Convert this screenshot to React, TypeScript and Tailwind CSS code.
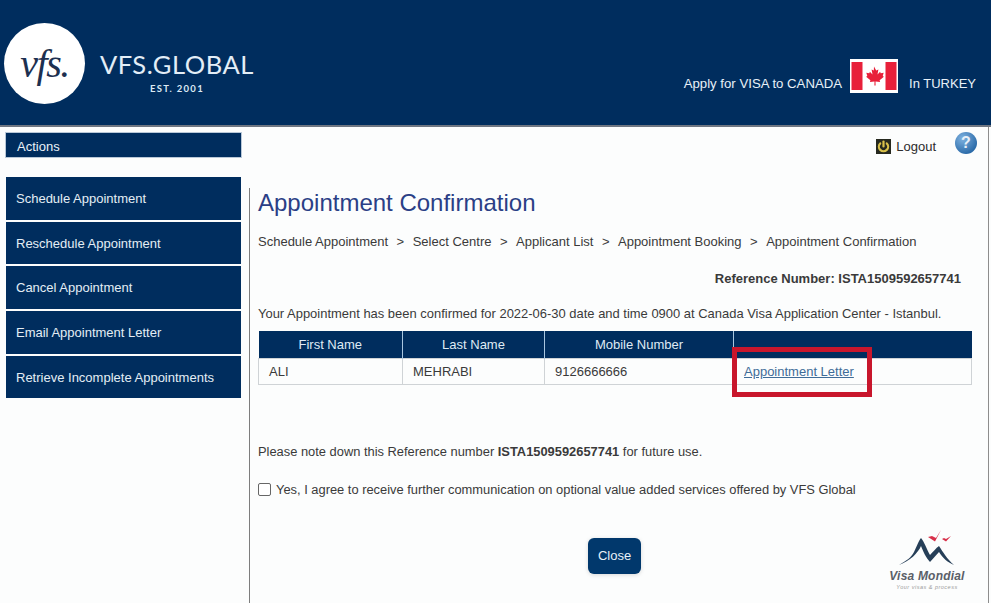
import React from 'react';

const menuItems = [
  { label: 'Schedule Appointment', height: 'h-[43px]' },
  { label: 'Reschedule Appointment', height: 'h-[42px] pt-[1px]' },
  { label: 'Cancel Appointment', height: 'h-[43px]' },
  { label: 'Email Appointment Letter', height: 'h-[43px]' },
  { label: 'Retrieve Incomplete Appointments', height: 'h-[42px] pt-[1px]' },
];

const crumbs = ['Schedule Appointment', 'Select Centre', 'Applicant List', 'Appointment Booking', 'Appointment Confirmation'];

function MapleFlag() {
  return (
    <svg viewBox="0 0 48 32" className="h-[34px] w-[48px]">
      <rect width="48" height="32" fill="#ffffff" />
      <rect x="1.5" y="2" width="11" height="28" fill="#e8203a" />
      <rect x="35.5" y="2" width="11" height="28" fill="#e8203a" />
      <path
        d="M24 6.5l2.2 4 2.2-1.1-.9 5 2.6-2.6.6 1.5 3-.5-1 3.2 1.2.7-4.3 3.6.5 1.7-4.6-.6.1 4.1h-1.2l.1-4.1-4.6.6.5-1.7-4.3-3.6 1.2-.7-1-3.2 3 .5.6-1.5 2.6 2.6-.9-5 2.2 1.1z"
        fill="#e8203a"
      />
    </svg>
  );
}

function PowerIcon() {
  return (
    <svg viewBox="0 0 15 15" className="h-[15px] w-[15px]">
      <rect width="15" height="15" fill="#26291f" />
      <path d="M4.2 4.4a4.6 4.6 0 1 0 6.6 0" fill="none" stroke="#d8c04a" strokeWidth="2.2" strokeLinecap="round" />
      <path d="M7.5 2.5v5" stroke="#d8c04a" strokeWidth="2.2" strokeLinecap="round" />
    </svg>
  );
}

function HelpIcon() {
  return (
    <div className="flex h-[22px] w-[22px] items-center justify-center rounded-full bg-[radial-gradient(circle_at_35%_30%,#7fb2e0,#2a6aa8_75%)] text-[16px] font-bold text-[#e8f0f8]">
      ?
    </div>
  );
}

function VisaMondialLogo() {
  return (
    <div className="flex w-[80px] flex-col items-center whitespace-nowrap">
      <svg viewBox="0 0 60 40" className="h-[40px] w-[60px]">
        <path d="M2 37C10 32 14 30 17 24C20 18 22 12 24 10C27 13 30 22 33 27C36 24 39 20 42 18C46 24 50 31 57 37C50 34 46 30 42 24C39 27 36 31 33 34C29 30 26 23 24 18C21 25 13 33 2 37Z" fill="#263f58" />
        <path d="M31 9L38 13.5L44 2L39 10L35 8Z" fill="#d8304a" />
        <path d="M45 11L49 13.5L54 8L49 11L47 10Z" fill="#d8304a" />
      </svg>
      <span className="mt-[1px] text-[12px] leading-[14px] font-bold tracking-[0.2px] text-[#5a6068] italic">Visa Mondial</span>
      <span className="mt-[1px] text-[5.5px] leading-[7px] tracking-[0.5px] text-[#9a9a9a] italic">Your visas & process</span>
    </div>
  );
}

export default function App() {
  return (
    <div className="flex h-[603px] w-[991px] flex-col overflow-hidden bg-[#fcfdfd] font-['Liberation_Sans',Arial,sans-serif] text-[13px] text-[#3a3a3a]">
      {/* Header */}
      <header className="flex h-[127px] shrink-0 items-start justify-between border-b-2 border-[#6f7682] bg-[#002d5e]">
        <div className="mt-[23px] ml-[4px] flex items-center">
          <div className="flex h-[81px] w-[81px] items-center justify-center rounded-full bg-white font-['Liberation_Serif',serif] text-[40px] leading-none tracking-[-1.5px] text-[#1d3050] italic">
            vfs.
          </div>
          <div className="mt-[18px] ml-[15px] flex flex-col items-center">
            <span className="font-['Lato',sans-serif] text-[25.5px] leading-[28px] font-normal tracking-[0.55px] text-[#e3eef7]">VFS.GLOBAL</span>
            <span className="mt-[5px] font-['Lato',sans-serif] text-[9.5px] leading-[12px] font-bold tracking-[1.3px] text-[#dce9f4]">EST. 2001</span>
          </div>
        </div>
        <div className="mt-[59px] mr-[15px] flex items-start text-[#e8f1f8]">
          <span className="mt-[15px] text-[13.2px]">Apply for VISA to CANADA</span>
          <span className="mx-[8px] block h-[34px] w-[48px] bg-white">
            <MapleFlag />
          </span>
          <span className="mt-[15px] ml-[3px]">In TURKEY</span>
        </div>
      </header>

      <div className="mr-[2px] flex min-h-0 flex-1 border-r border-r-[#8d8d8d]">
        {/* Sidebar */}
        <aside className="w-[249px] shrink-0 pt-[5px] pl-[5px]">
          <div className="flex h-[26px] w-[237px] items-center border border-[#b9c8d8] bg-[#002d5e] pt-[3px] pl-[11px] text-[#eaf2f8]">Actions</div>
          <nav className="mt-[19px] ml-[1px] flex w-[235px] flex-col gap-[2px]">
            {menuItems.map(item => (
              <div key={item.label} className={`flex ${item.height} items-center bg-[#002d5e] pl-[10px] text-[#e4edf5]`}>
                {item.label}
              </div>
            ))}
          </nav>
        </aside>

        {/* Content */}
        <main className="relative min-w-0 flex-1">
          <div className="flex h-[45px] items-start justify-end pr-[11px]">
            <div className="mt-[10px] flex items-center">
              <PowerIcon />
              <span className="mr-[19px] ml-[5px] text-[#2c2c2c]">Logout</span>
            </div>
            <div className="mt-[5px]">
              <HelpIcon />
            </div>
          </div>
          <div className="h-[431px] border-l border-[#7d7d7d] pl-[8px]">
            <h1 className="mt-[16px] text-[24px] leading-[30px] text-[#2b3f86]">Appointment Confirmation</h1>
            <div className="mt-[14px] flex items-center gap-[8.5px] leading-[20px]">
              {crumbs.map((crumb, i) => (
                <React.Fragment key={crumb}>
                  {i > 0 && <span>&gt;</span>}
                  <span>{crumb}</span>
                </React.Fragment>
              ))}
            </div>
            <div className="mt-[17px] pr-[27px] text-right leading-[20px] font-bold">Reference Number: ISTA1509592657741</div>
            <p className="mt-[15px] text-[12.96px] leading-[20px] whitespace-nowrap">Your Appointment has been confirmed for 2022-06-30 date and time 0900 at Canada Visa Application Center - Istanbul.</p>

            <table className="relative mt-[7px] w-[714px] table-fixed border-collapse">
              <thead>
                <tr className="h-[27px] bg-[#002d5e] font-normal text-[#dfeaf4]">
                  <th className="w-[144px] border-r border-[#a9c6e0] font-normal">First Name</th>
                  <th className="w-[142px] border-r border-[#a9c6e0] font-normal">Last Name</th>
                  <th className="w-[189px] border-r border-[#a9c6e0] font-normal">Mobile Number</th>
                  <th />
                </tr>
              </thead>
              <tbody>
                <tr className="h-[26px]">
                  <td className="border border-[#cfd3d6] pt-[1px] pl-[10px]">ALI</td>
                  <td className="border border-[#cfd3d6] pt-[1px] pl-[10px]">MEHRABI</td>
                  <td className="border border-[#cfd3d6] pt-[1px] pl-[10px]">9126666666</td>
                  <td className="border border-[#cfd3d6] pt-[1px] pl-[10px]">
                    <a href="#" className="text-[#3f6c98] underline">Appointment Letter</a>
                  </td>
                </tr>
              </tbody>
            </table>

            <p className="mt-[57px] text-[12.88px] leading-[20px]">
              Please note down this Reference number <b>ISTA1509592657741</b> for future use.
            </p>
            <label className="mt-[18px] flex items-center text-[12.89px] leading-[20px]">
              <span className="mr-[5px] block h-[13px] w-[13px] rounded-[2px] border-[1.5px] border-[#666666] bg-white" />
              Yes, I agree to receive further communication on optional value added services offered by VFS Global
            </label>
            <div className="mt-[38px] ml-[330px]">
              <button className="h-[36px] w-[53px] rounded-[6px] bg-[#01386c] text-[#e8f1f8] shadow-[0_1px_4px_rgba(0,0,0,0.15)]">Close</button>
            </div>
          </div>

          {/* Red annotation over the link */}
          <div className="absolute top-[220px] left-[483px] h-[50px] w-[140px] border-[5px] border-[#c8162c]" />
          <div className="absolute top-[401px] left-[638px]">
            <VisaMondialLogo />
          </div>
        </main>
      </div>
    </div>
  );
}
